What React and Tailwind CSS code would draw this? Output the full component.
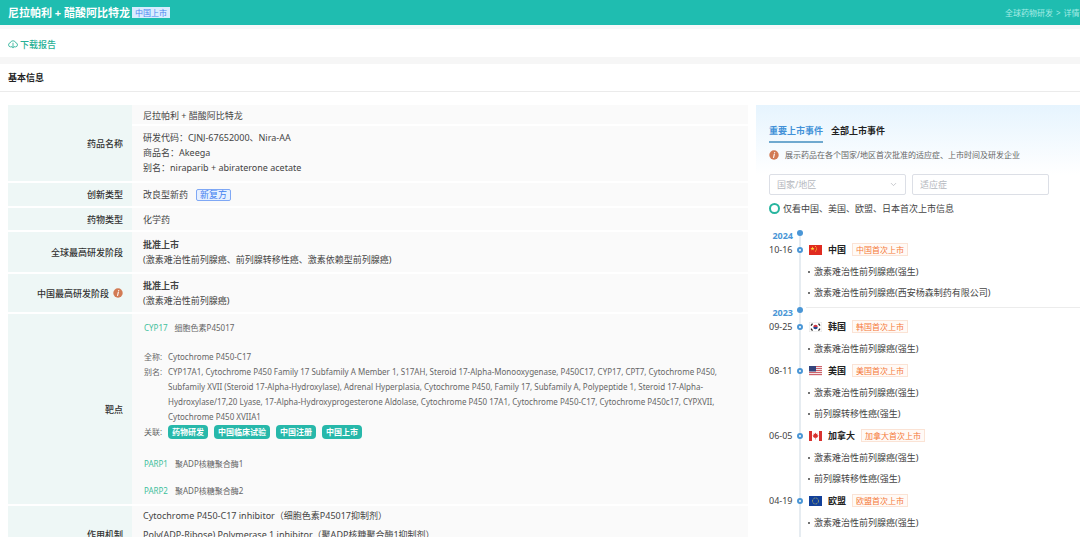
import { useState } from "react";
import { ChevronDown } from "lucide-react";

const TARGET_LINKS = ["药物研发", "中国临床试验", "中国注册", "中国上市"];

const ALIASES =
  "CYP17A1, Cytochrome P450 Family 17 Subfamily A Member 1, S17AH, Steroid 17-Alpha-Monooxygenase, P450C17, CYP17, CPT7, Cytochrome P450, Subfamily XVII (Steroid 17-Alpha-Hydroxylase), Adrenal Hyperplasia, Cytochrome P450, Family 17, Subfamily A, Polypeptide 1, Steroid 17-Alpha-Hydroxylase/17,20 Lyase, 17-Alpha-Hydroxyprogesterone Aldolase, Cytochrome P450 17A1, Cytochrome P450-C17, Cytochrome P450c17, CYPXVII, Cytochrome P450 XVIIA1";

const TIMELINE = [
  {
    year: "2024",
    events: [
      {
        date: "10-16",
        flag: "cn",
        country: "中国",
        items: ["激素难治性前列腺癌(强生)", "激素难治性前列腺癌(西安杨森制药有限公司)"],
      },
    ],
  },
  {
    year: "2023",
    events: [
      {
        date: "09-25",
        flag: "kr",
        country: "韩国",
        items: ["激素难治性前列腺癌(强生)"],
      },
      {
        date: "08-11",
        flag: "us",
        country: "美国",
        items: ["激素难治性前列腺癌(强生)", "前列腺转移性癌(强生)"],
      },
      {
        date: "06-05",
        flag: "ca",
        country: "加拿大",
        items: ["激素难治性前列腺癌(强生)", "前列腺转移性癌(强生)"],
      },
      {
        date: "04-19",
        flag: "eu",
        country: "欧盟",
        items: ["激素难治性前列腺癌(强生)", "前列腺转移性癌(强生)"],
      },
    ],
  },
];

export default function App() {
  return (
    <div className="h-screen overflow-hidden bg-white font-['Noto_Sans','Noto_Sans_CJK_SC',sans-serif] text-[9px] leading-[15px] text-[#444]">
      <header className="flex h-[25px] items-center overflow-hidden bg-[#1fbdb0] pl-2">
        <h1 className="whitespace-nowrap text-[11px] font-bold text-white">
          尼拉帕利 + 醋酸阿比特龙
        </h1>
        <span className="ml-[2px] whitespace-nowrap bg-[#d9ecff] px-[3px] text-[8px] leading-[11px] text-[#4a86f0]">
          中国上市
        </span>
        <nav className="ml-auto w-[75px] overflow-hidden whitespace-nowrap text-[8px] text-[#a4ece5]">
          <a href="#global">全球药物研发</a>
          <span className="mx-[3px]">&gt;</span>
          详情
        </nav>
      </header>

      <div className="flex h-8 items-center border-t-4 border-[#f8f9fa] px-2 pt-[2px]">
        <button className="flex items-center gap-[2px] font-medium text-[#27b095]">
          <CloudIcon />
          下载报告
        </button>
      </div>

      <section className="border-t-[7px] border-[#f6f6f6]">
        <h2 className="border-b border-[#ebebeb] px-2 py-[6px] font-bold text-[#222]">
          基本信息
        </h2>
        <div className="flex gap-2 pl-2 pt-[13px]">
          <DrugTable />
          <EventPanel />
        </div>
      </section>
    </div>
  );
}

function DrugTable() {
  return (
    <table className="min-w-0 flex-1 table-fixed border-collapse self-start">
      <colgroup>
        <col className="w-[124px]" />
        <col />
      </colgroup>
      <tbody>
        <Row label="药品名称">
          <div className="-ml-[11px] border-b-2 border-white pb-px pl-[11px] pt-[3px]">
            尼拉帕利 + 醋酸阿比特龙
          </div>
          <div className="pb-[6px] pt-1">
            <p>研发代码：CJNJ-67652000、Nira-AA</p>
            <p>商品名：Akeega</p>
            <p>别名：niraparib + abiraterone acetate</p>
          </div>
        </Row>
        <Row label="创新类型">
          <div className="flex items-center gap-2 py-[4px]">
            改良型新药
            <span className="rounded-xs border border-[#7fa8f5] bg-[#e6f0ff] px-[3px] leading-[10px] text-[#3f7ff0]">
              新复方
            </span>
          </div>
        </Row>
        <Row label="药物类型">
          <div className="pb-[3px] pt-[4px]">化学药</div>
        </Row>
        <Row label="全球最高研发阶段">
          <div className="py-[5px]">
            <p className="font-bold">批准上市</p>
            <p>(激素难治性前列腺癌、前列腺转移性癌、激素依赖型前列腺癌)</p>
          </div>
        </Row>
        <Row label="中国最高研发阶段" info>
          <div className="py-[4px]">
            <p className="font-bold">批准上市</p>
            <p>(激素难治性前列腺癌)</p>
          </div>
        </Row>
        <Row label="靶点">
          <div className="py-[6px] pl-px text-[8px] text-[#666]">
            <Target code="CYP17" name="细胞色素P45017" />
            <dl className="mb-[17px] mt-[14px] grid grid-cols-[24px_1fr]">
              <dt>全称:</dt>
              <dd>Cytochrome P450-C17</dd>
              <dt>别名:</dt>
              <dd className="pr-5">{ALIASES}</dd>
              <dt>关联:</dt>
              <dd className="flex items-center gap-[6px]">
                {TARGET_LINKS.map((link) => (
                  <a
                    key={link}
                    href="#related"
                    className="rounded-sm bg-[#27b8aa] px-1 font-bold leading-[14px] text-white"
                  >
                    {link}
                  </a>
                ))}
              </dd>
            </dl>
            <Target code="PARP1" name="聚ADP核糖聚合酶1" />
            <div className="mt-3">
              <Target code="PARP2" name="聚ADP核糖聚合酶2" />
            </div>
          </div>
        </Row>
        <Row label="作用机制">
          <div className="leading-[19px]">
            <p>Cytochrome P450-C17 inhibitor（细胞色素P45017抑制剂）</p>
            <p>Poly(ADP-Ribose) Polymerase 1 inhibitor（聚ADP核糖聚合酶1抑制剂）</p>
            <p>Poly(ADP-Ribose) Polymerase 2 inhibitor（聚ADP核糖聚合酶2抑制剂）</p>
          </div>
        </Row>
      </tbody>
    </table>
  );
}

function Row({ label, info = false, children }) {
  return (
    <tr className="border-b-2 border-white">
      <th
        scope="row"
        className="bg-[#eef7f6] p-0 pr-[9px] text-right font-medium text-[#333]"
      >
        <span className="inline-flex items-center gap-1">
          {label}
          {info && <InfoIcon />}
        </span>
      </th>
      <td className="bg-[#fafafa] p-0 pl-[11px]">{children}</td>
    </tr>
  );
}

function Target({ code, name }) {
  return (
    <p className="flex gap-[7px]">
      <a href="#target" className="text-[#3fbf9c]">
        {code}
      </a>
      <span>{name}</span>
    </p>
  );
}

function EventPanel() {
  const [tab, setTab] = useState("key");
  const [majorOnly, setMajorOnly] = useState(false);

  return (
    <aside className="w-[324px] shrink-0 bg-linear-to-b from-[#e6f4fe] to-white to-[70px] px-[13px] pt-[18px]">
      <div role="tablist" className="flex gap-2">
        <Tab active={tab === "key"} onClick={() => setTab("key")}>
          重要上市事件
        </Tab>
        <Tab active={tab === "all"} onClick={() => setTab("all")}>
          全部上市事件
        </Tab>
      </div>

      <p className="mt-1 flex items-center gap-[6px] whitespace-nowrap text-[8px] text-[#666]">
        <InfoIcon />
        展示药品在各个国家/地区首次批准的适应症、上市时间及研发企业
      </p>

      <div className="mr-[18px] mt-3 grid grid-cols-2 gap-[6px]">
        <div className="relative">
          <select
            aria-label="国家/地区"
            defaultValue=""
            className="block h-[21px] w-full appearance-none rounded-xs border border-[#dcdfe6] bg-white px-[7px] text-[#b5b8be]"
          >
            <option value="">国家/地区</option>
            <option value="cn">中国</option>
            <option value="us">美国</option>
          </select>
          <ChevronDown
            className="pointer-events-none absolute right-2 top-[6px] size-[9px] text-[#b5b8be]"
            strokeWidth={2}
          />
        </div>
        <input
          type="text"
          aria-label="适应症"
          placeholder="适应症"
          className="h-[21px] min-w-0 rounded-xs border border-[#dcdfe6] bg-white px-[7px] placeholder:text-[#b5b8be]"
        />
      </div>

      <label className="mt-[6px] flex items-center gap-[3px] whitespace-nowrap">
        <input
          type="radio"
          checked={majorOnly}
          onChange={() => setMajorOnly(true)}
          className="size-[11px] appearance-none rounded-full border-2 border-[#27b59f] bg-white"
        />
        仅看中国、美国、欧盟、日本首次上市信息
      </label>

      <Timeline />
    </aside>
  );
}

function Tab({ active, onClick, children }) {
  return (
    <button
      role="tab"
      aria-selected={active}
      onClick={onClick}
      className={`whitespace-nowrap border-b-2 pb-[3px] font-bold ${
        active
          ? "border-[#6fa9cf] text-[#4291d8]"
          : "border-transparent text-[#222]"
      }`}
    >
      {children}
    </button>
  );
}

function Timeline() {
  return (
    <div className="relative -mr-[13px] mt-[14px]">
      <div className="absolute bottom-0 left-[30px] top-1 w-[2px] bg-[#e6ecf1]" />
      {TIMELINE.map(({ year, events }, i) => (
        <section key={year} className="relative pb-1">
          <div className="flex h-2 items-start">
            <h3 className="w-[24px] pt-[2px] text-right font-bold leading-[8px] text-[#4a96d6]">
              {year}
            </h3>
            <span className="ml-[4px] size-[6px] rounded-full bg-[#4a96d6]" />
            {i > 0 && <span className="ml-[3px] flex-1 border-t border-[#ececec]" />}
          </div>
          {events.map((event) => (
            <Event key={event.date} {...event} />
          ))}
        </section>
      ))}
    </div>
  );
}

function Event({ date, flag, country, items }) {
  return (
    <div>
      <div className="flex h-[23px] items-center whitespace-nowrap">
        <time className="w-[24px]">{date}</time>
        <span className="ml-[4px] size-[6px] rounded-full border-2 border-[#4a96d6] bg-white" />
        <Flag code={flag} />
        <b className="ml-[6px] text-[#222]">{country}</b>
        <span className="ml-[6px] border border-[#fbe3d5] bg-[#fffaf6] px-[3px] text-[8px] leading-[11px] text-[#f5793a]">
          {country}首次上市
        </span>
      </div>
      <ul className="pl-[39px]">
        {items.map((item) => (
          <li key={item} className="flex items-center gap-1 leading-[21px]">
            <span className="size-[2px] rounded-full bg-[#444]" />
            {item}
          </li>
        ))}
      </ul>
    </div>
  );
}

function Flag({ code }) {
  return (
    <svg viewBox="0 0 26 20" className="ml-[6px] h-[10px] w-[13px]">
      {code === "cn" && (
        <>
          <rect width="26" height="20" fill="#e02b20" />
          <path
            d="M7 3l1.1 3H11L8.700 8l.9 3L7 9.200 4.400 11l.9-3L3 6h2.900z"
            fill="#ffdf3e"
          />
          <circle cx="13" cy="3" r="1" fill="#ffdf3e" />
          <circle cx="15" cy="6" r="1" fill="#ffdf3e" />
          <circle cx="15" cy="9.500" r="1" fill="#ffdf3e" />
          <circle cx="13" cy="12" r="1" fill="#ffdf3e" />
        </>
      )}
      {code === "kr" && (
        <>
          <rect x=".5" y=".5" width="25" height="19" fill="#fff" stroke="#e2e2e2" />
          <path d="M8.500 10a4.500 4.500 0 0 1 9 0z" fill="#cd3744" />
          <path d="M8.500 10a4.500 4.500 0 0 0 9 0z" fill="#24478f" />
          <path
            d="M4 7l3-4M19 3l3 4M4 13l3 4M19 17l3-4"
            stroke="#222"
            strokeWidth="2.500"
          />
        </>
      )}
      {code === "us" && (
        <>
          <rect width="26" height="20" fill="#f3e4e6" />
          <path
            d="M0 1h26M0 5h26M0 9h26M0 13h26M0 17h26"
            stroke="#c9525c"
            strokeWidth="1.800"
          />
          <rect width="14" height="11" fill="#34447c" />
        </>
      )}
      {code === "ca" && (
        <>
          <rect width="26" height="20" fill="#fff" />
          <path d="M0 0h6v20H0zM20 0h6v20h-6z" fill="#d8322f" />
          <path
            d="M13 3l1.500 3L17 5l-.5 3.500L19 9l-3 4.500h-2.500V17h-1v-3.500H10L7 9l2.500-.5L9 5l2.500 1z"
            fill="#d8322f"
          />
        </>
      )}
      {code === "eu" && (
        <>
          <rect width="26" height="20" fill="#12409a" />
          <circle
            cx="13"
            cy="10"
            r="6"
            fill="none"
            stroke="#d9cf5a"
            strokeWidth="1.800"
            strokeDasharray="1.600 1.540"
          />
        </>
      )}
    </svg>
  );
}

function InfoIcon() {
  return (
    <svg viewBox="0 0 18 18" className="size-[10px] shrink-0">
      <circle cx="9" cy="9" r="8.500" fill="#d27b55" />
      <path d="M9.600 7.500L8.300 13.500" stroke="#fff" strokeWidth="2" strokeLinecap="round" />
      <circle cx="10.200" cy="4.600" r="1.200" fill="#fff" />
    </svg>
  );
}

function CloudIcon() {
  return (
    <svg
      viewBox="0 0 24 24"
      className="size-[10px]"
      fill="none"
      stroke="currentColor"
      strokeWidth="2"
      strokeLinecap="round"
      strokeLinejoin="round"
    >
      <path d="M8 19H6a5 5 0 0 1-.6-9.900 7 7 0 0 1 13.300 0A5 5 0 0 1 18 19h-2" />
      <path d="M12 10v11M9 18l3 3 3-3" />
    </svg>
  );
}
